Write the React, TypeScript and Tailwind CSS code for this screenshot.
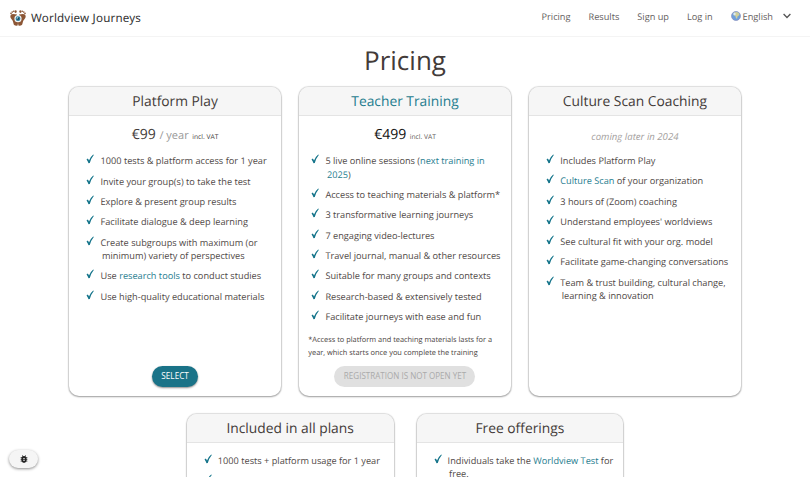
import React from "react";

const Check = () => (
  <svg viewBox="0 0 8 10" className="h-[10px] w-[8px] shrink-0 text-[#14748a]" fill="currentColor">
    <path d="M0.5 5.4 L1.8 4.6 Q2.6 5.4 3 6.5 Q4.4 2.6 7.2 0.4 L7.8 0.9 Q5 4.2 3.8 9 L2.5 9.2 Q1.8 6.9 0.5 5.4 Z" />
  </svg>
);

const Teal = ({ children }: { children: React.ReactNode }) => <a className="text-[#1f7d8f]">{children}</a>;

const List = ({ items, className = "" }: { items: React.ReactNode[]; className?: string }) => (
  <ul className={"flex flex-col gap-[6.8px] text-[9.2px] leading-[13.5px] whitespace-nowrap text-[#4f4846] " + className}>
    {items.map((t, i) => (
      <li key={i} className="flex">
        <Check />
        <span className="ml-[7.6px] block -indent-[1.5px]">{t}</span>
      </li>
    ))}
  </ul>
);

const Card = ({ title, className, children }: { title: React.ReactNode; className: string; children: React.ReactNode }) => (
  <section className={"flex flex-col overflow-hidden rounded-[10px] bg-white shadow-[0_1px_2px_0px_rgba(0,0,0,0.3),0_0_1px_0.5px_rgba(0,0,0,0.12)] " + className}>
    <h2 className="h-[28.5px] shrink-0 border-b border-[#e4e4e4] bg-[#f6f6f6] text-center text-[13.8px] leading-[29px] text-[#433b39]">{title}</h2>
    {children}
  </section>
);

export default function App() {
  return (
    <div className="relative h-[477px] w-[810px] overflow-hidden bg-white font-['Open_Sans',sans-serif] [text-rendering:geometricPrecision]">
      <header className="flex h-[37px] items-center border-b border-[#f4f4f4] pl-[10px] text-[9.2px] text-[#65605e]">
        <svg viewBox="0 0 16 16" className="h-[16px] w-[16px]">
          <g fill="#8c5635">
            <path d="M.3 6 Q.5 4 3 4 L7 4.5 L8 13 L7.6 15.6 Q3.6 16.2 3.4 13 Q3 10.5 1.4 9 Q.3 8 .3 6 Z" />
            <path d="M15.7 6 Q15.5 4 13 4 L9 4.5 L8 13 L8.4 15.6 Q12.4 16.2 12.6 13 Q13 10.5 14.6 9 Q15.7 8 15.7 6 Z" />
            <circle cx="1" cy="3.4" r=".8" /><circle cx="2.2" cy="2.1" r=".8" /><circle cx="3.7" cy="1.3" r=".8" /><ellipse cx="5.6" cy="1.6" rx="1.1" ry="1.4" />
            <circle cx="15" cy="3.4" r=".8" /><circle cx="13.8" cy="2.1" r=".8" /><circle cx="12.3" cy="1.3" r=".8" /><ellipse cx="10.4" cy="1.6" rx="1.1" ry="1.4" />
          </g>
          <circle cx="8" cy="8.7" r="3.6" fill="#eef4f5" />
          <circle cx="8" cy="8.7" r="2.4" fill="#2c7c9b" />
          <circle cx="8" cy="8.7" r="1" fill="#173e50" />
          <circle cx="7.3" cy="7.9" r=".6" fill="#fff" />
          <path d="M6.8 4 L8 5 L9.2 4 L8 0 Z" fill="#fff" />
        </svg>
        <span className="mt-[2px] ml-[5px] font-['Noto_Sans',sans-serif] text-[11.6px] tracking-[0.18px] text-[#333]">Worldview Journeys</span>
        <nav className="ml-auto flex items-center pr-[19px] pb-[3px] whitespace-nowrap">
          <a>Pricing</a>
          <a className="ml-[18px]">Results</a>
          <a className="ml-[18px]">Sign up</a>
          <a className="ml-[18px]">Log in</a>
          <svg viewBox="0 0 10 10" className="ml-[18px] h-[10px] w-[10px]">
            <circle cx="5" cy="5" r="4.5" fill="#6fa0dc" stroke="#8b90bd" strokeWidth=".7" />
            <path d="M3 1.5 Q6 .4 8 2.2 L8.5 4 L6.5 5.5 L6 8 L4.8 6.8 L4.4 5 L2.5 4.2 Z" fill="#cfcf9a" />
            <circle cx="3.5" cy="3" r="1.2" fill="#dceaf5" />
          </svg>
          <span className="ml-[2px]">English</span>
          <svg viewBox="0 0 8 6" className="ml-[10px] h-[6px] w-[8px]" fill="none" stroke="#555" strokeWidth="1.3"><path d="M.6 1 L4 4.5 L7.4 1" /></svg>
        </nav>
      </header>
      <h1 className="mt-[3px] text-center text-[26px] leading-[40px] text-[#433b39]">Pricing</h1>
      <div className="mt-[7px] flex justify-center gap-[18.5px]">
        <Card className="h-[308.5px] w-[211.4px]" title="Platform Play">
          <div className="mt-[9.5px] h-[20px] text-center text-[14px] leading-[20px] whitespace-nowrap text-[#433b39]">€99 <span className="text-[11px] text-[#999]">/ year</span> <span className="text-[6.7px]">incl. VAT</span></div>
          <List className="mt-[9.4px] ml-[17px]" items={[
            "1000 tests & platform access for 1 year", "Invite your group(s) to take the test", "Explore & present group results", "Facilitate dialogue & deep learning",
            <>Create subgroups with maximum (or<br />minimum) variety of perspectives</>, <>Use <Teal>research tools</Teal> to conduct studies</>, "Use high-quality educational materials",
          ]} />
          <button className="mx-auto mt-auto mb-[9px] h-[21px] w-[46px] rounded-full bg-[#1a7388] text-[8.2px] text-white shadow-[0_1px_2px_rgba(0,0,0,0.45)]">SELECT</button>
        </Card>
        <Card className="h-[308.5px] w-[211.4px]" title={<Teal>Teacher Training</Teal>}>
          <div className="mt-[9.5px] h-[20px] text-center text-[14px] leading-[20px] text-[#111]">€499 <span className="text-[6.7px] text-[#5d5654]">incl. VAT</span></div>
          <List className="mt-[9.4px] ml-[12px]" items={[
            <>5 live online sessions (<Teal>next training in<br />2025</Teal>)</>, "Access to teaching materials & platform*", "3 transformative learning journeys", "7 engaging video-lectures",
            "Travel journal, manual & other resources", "Suitable for many groups and contexts", "Research-based & extensively tested", "Facilitate journeys with ease and fun",
          ]} />
          <p className="mt-[10.5px] ml-[9px] text-[7.4px] leading-[13px] whitespace-nowrap text-[#4a4341]">*Access to platform and teaching materials lasts for a<br />year, which starts once you complete the training</p>
          <button className="mx-auto mt-auto mb-[9px] h-[21px] w-[141px] rounded-full bg-[#e0e0e0] text-[8.05px] text-[#aaa]">REGISTRATION IS NOT OPEN YET</button>
        </Card>
        <Card className="h-[308.5px] w-[211.4px]" title="Culture Scan Coaching">
          <div className="mt-[11px] h-[20px] text-center text-[9.6px] leading-[20px] text-[#a5a1a0] italic">coming later in 2024</div>
          <List className="mt-[7.5px] ml-[17px]" items={[
            "Includes Platform Play", <><Teal>Culture Scan</Teal> of your organization</>, "3 hours of (Zoom) coaching", "Understand employees' worldviews", "See cultural fit with your org. model",
            "Facilitate game-changing conversations", <>Team & trust building, cultural change,<br />learning & innovation</>,
          ]} />
        </Card>
      </div>
      <div className="mt-[18.5px] flex justify-center gap-[23px]">
        <Card className="h-[200px] w-[206.8px]" title="Included in all plans">
          <List className="mt-[11px] ml-[17px]" items={["1000 tests + platform usage for 1 year", "Additional tests at a reduced fee"]} />
        </Card>
        <Card className="h-[200px] w-[206.8px]" title="Free offerings">
          <List className="mt-[11px] ml-[17px]" items={[<>Individuals take the <Teal>Worldview Test</Teal> for<br />free.</>]} />
        </Card>
      </div>
      <button className="absolute top-[450px] left-[9px] flex h-[18px] w-[29px] items-center justify-center rounded-full bg-[#f5f5f5] shadow-[0_1px_3px_rgba(0,0,0,0.45)]">
        <svg viewBox="0 0 24 24" className="h-[10px] w-[10px]" fill="#222"><path d="M20 8h-2.81a5.985 5.985 0 0 0-1.82-1.96L17 4.41 15.59 3l-2.17 2.17a6 6 0 0 0-2.83 0L8.41 3 7 4.41l1.62 1.63C7.88 6.55 7.26 7.22 6.81 8H4v2h2.09c-.05.33-.09.66-.09 1v1H4v2h2v1c0 .34.04.67.09 1H4v2h2.81c1.04 1.79 2.97 3 5.19 3s4.15-1.21 5.19-3H20v-2h-2.09c.05-.33.09-.66.09-1v-1h2v-2h-2v-1c0-.34-.04-.67-.09-1H20V8zm-6 8h-4v-2h4v2zm0-4h-4v-2h4v2z" /></svg>
      </button>
    </div>
  );
}
